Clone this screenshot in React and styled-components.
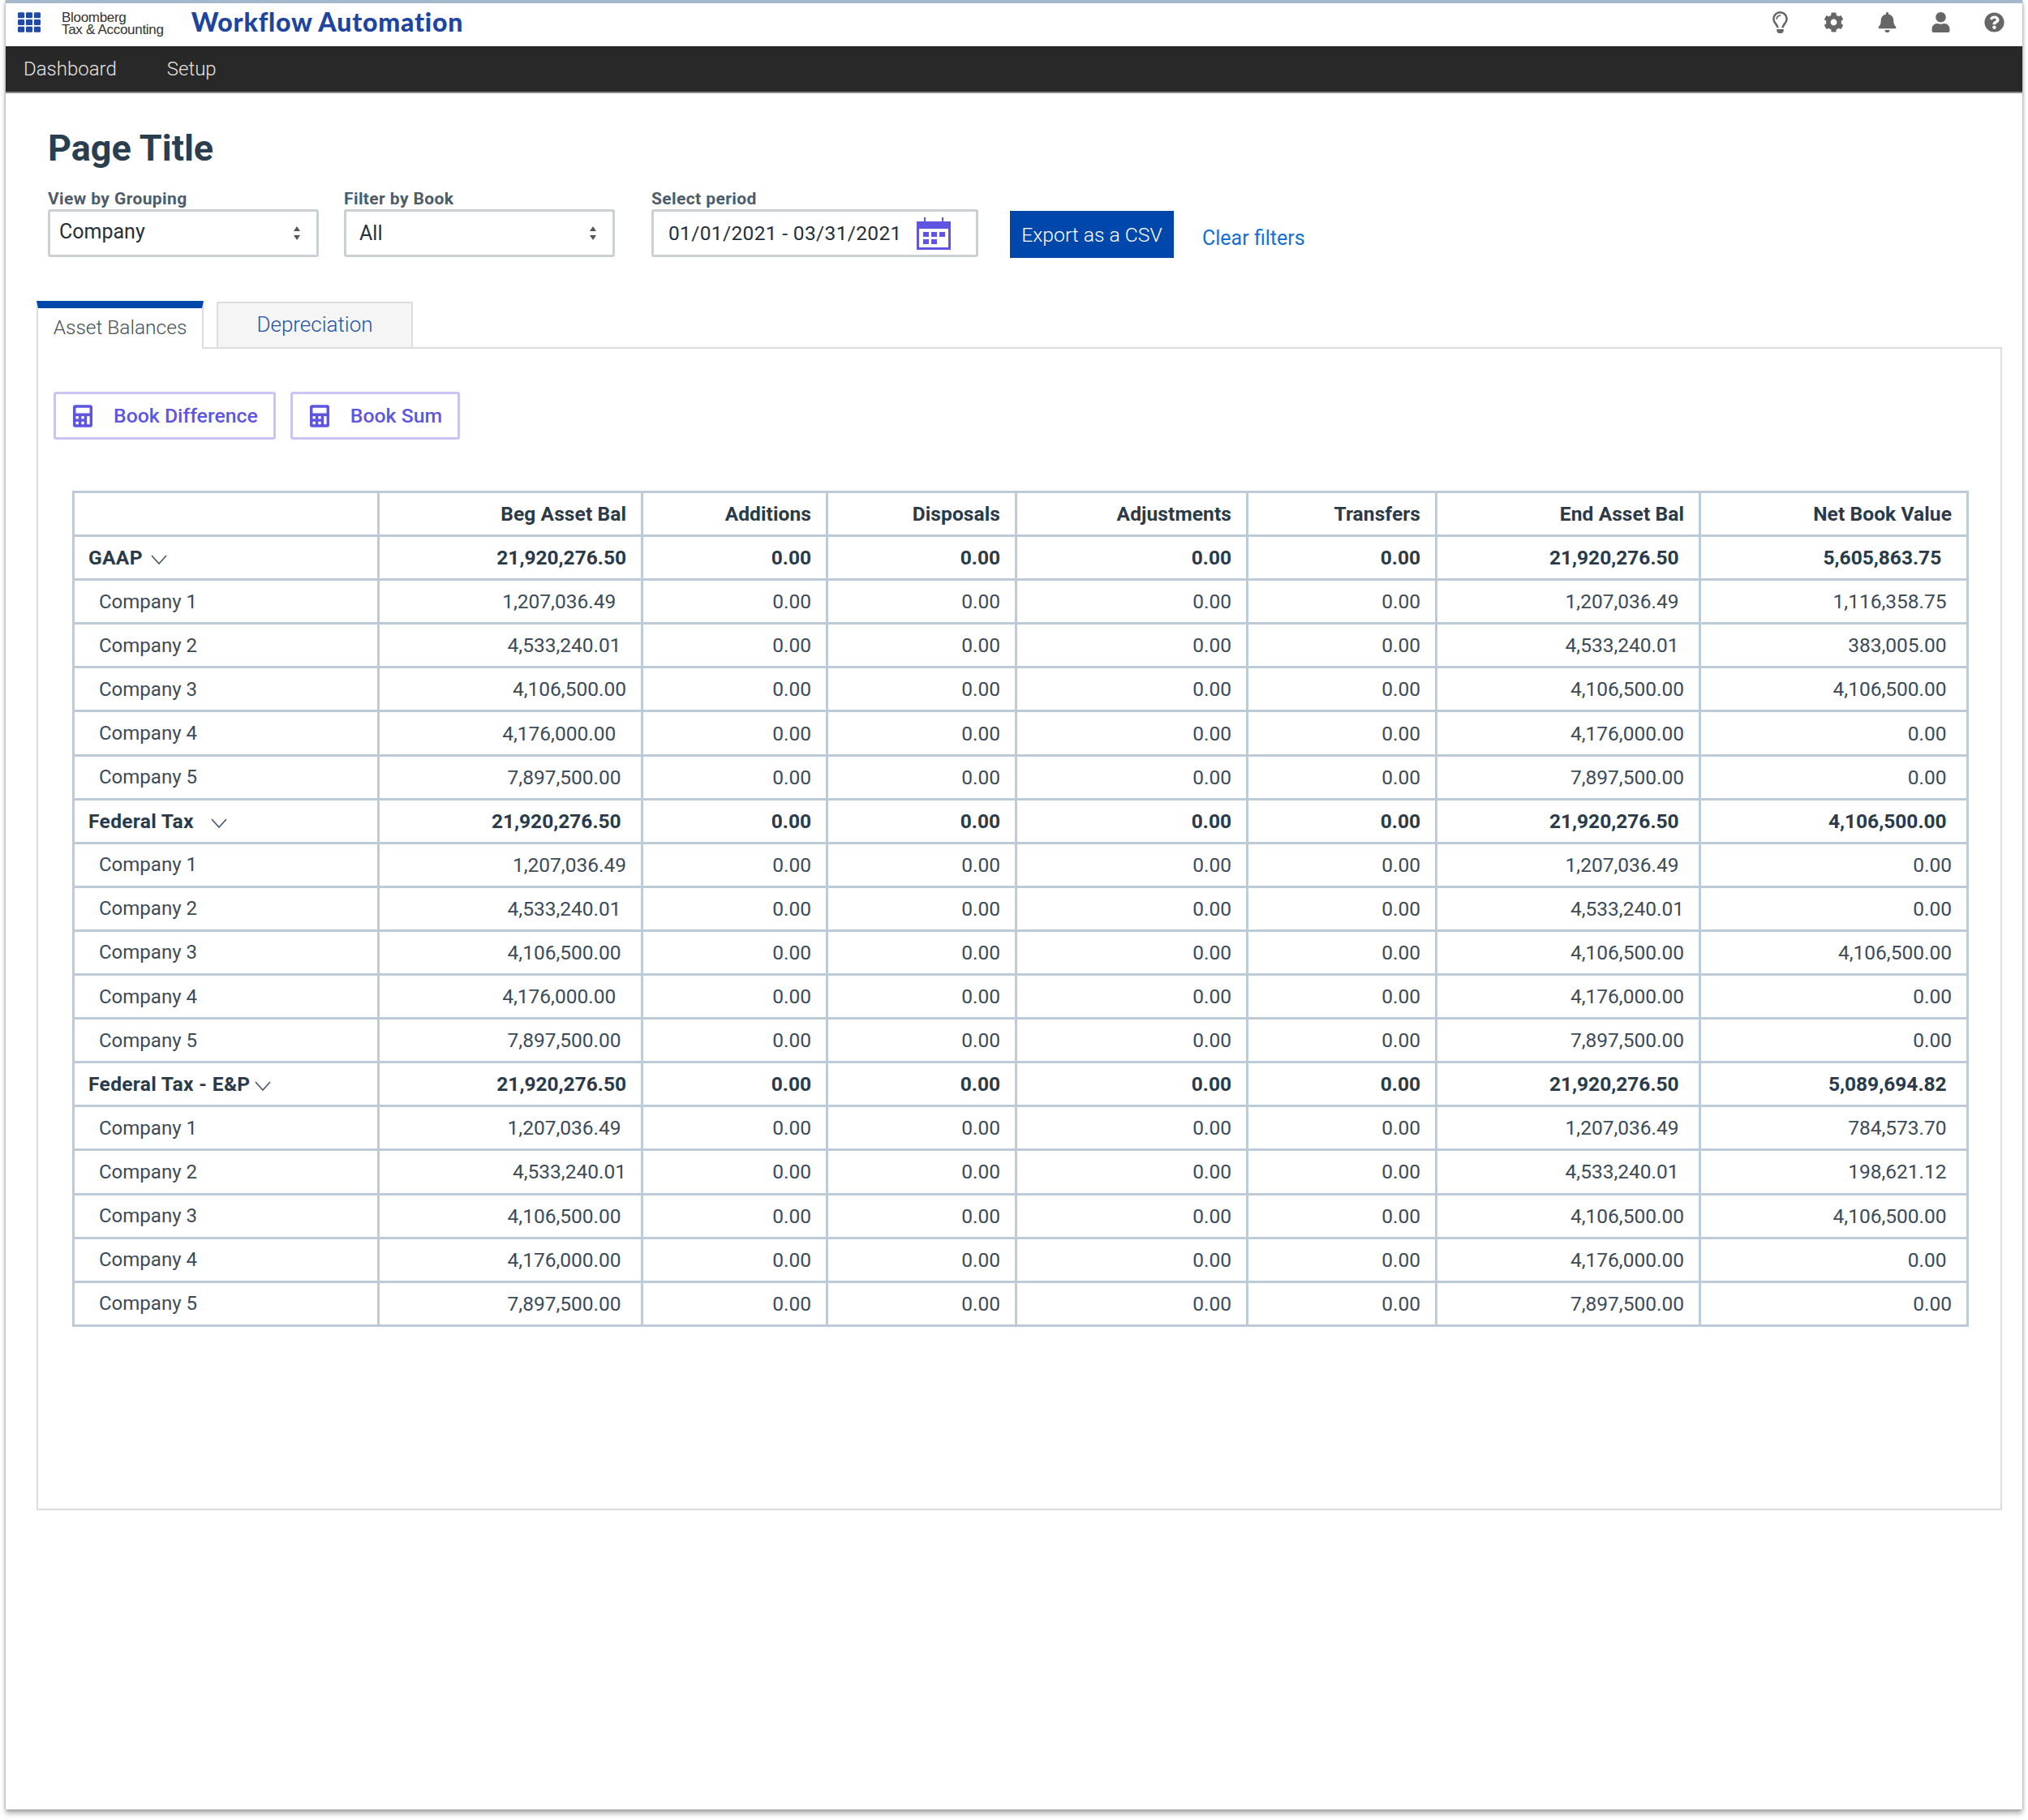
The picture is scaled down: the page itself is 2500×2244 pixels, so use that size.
import React from "react";
import styled, { createGlobalStyle } from "styled-components";
import { FaTh, FaRegLightbulb, FaCog, FaBell, FaUser, FaQuestionCircle, FaCalculator } from "react-icons/fa";

const GlobalStyle = createGlobalStyle`
  html, body { margin: 0; padding: 0; background: #fff; }
  body { font-family: Roboto, "Liberation Sans", sans-serif; }
  * { box-sizing: border-box; }
`;

const Page = styled.div`
  width: 2500px;
  height: 2244px;
  padding: 0 7px;
`;

const Frame = styled.div`
  height: 2231px;
  background: #fff;
  border-top: 4px solid #a4b8cb;
  box-shadow: 0 5px 6px rgba(0, 0, 0, 0.3), 1px 0 3px rgba(0, 0, 0, 0.15), -1px 0 3px rgba(0, 0, 0, 0.15);
`;

const TopBar = styled.div`
  display: flex;
  align-items: center;
  height: 53px;
  padding: 0 0 7px 15px;
`;

const AppGrid = styled(FaTh)`
  width: 28px;
  height: 31px;
  color: #1f4aa5;
`;

const Logo = styled.div`
  margin: 5px 0 0 26px;
  font-family: "Liberation Sans", sans-serif;
  font-size: 17px;
  line-height: 14.5px;
  letter-spacing: -0.3px;
  color: #333;
`;

const AppName = styled.div`
  margin: -1px 0 0 34px;
  font-family: Lato, sans-serif;
  font-weight: 900;
  font-size: 32px;
  letter-spacing: 0.8px;
  color: #1d45a0;
`;

const TopIcons = styled.div`
  margin-left: auto;
  display: flex;
  align-items: center;
  padding-right: 2px;
  color: #666;
`;

const IconSlot = styled.span`
  display: flex;
  justify-content: center;
  width: 66px;
  svg { height: ${(p) => p.$size || 25}px; width: auto; display: block; }
`;

const NavBar = styled.div`
  display: flex;
  align-items: center;
  gap: 62px;
  height: 58px;
  padding-left: 22px;
  background: #282828;
  border-bottom: 2px solid #8a8a8a;
`;

const NavItem = styled.span`
  font-size: 24px;
  font-weight: 300;
  color: #e4e4e4;
`;

const Header = styled.div`
  padding: 42px 0 0 52px;
`;

const Title = styled.h1`
  margin: 0;
  font-size: 45px;
  line-height: 52px;
  font-weight: 700;
  color: #2b3e50;
`;

const Filters = styled.div`
  display: flex;
  align-items: flex-end;
  margin-top: 25px;
`;

const Field = styled.div`
  width: ${(p) => p.$width}px;
  margin-right: ${(p) => p.$gap}px;
`;

const Label = styled.div`
  font-size: 21px;
  line-height: 22px;
  letter-spacing: 0.4px;
  margin-bottom: 2px;
  font-weight: 700;
  color: #4c5c6a;
`;

const Box = styled.div`
  display: flex;
  align-items: center;
  justify-content: space-between;
  height: 59px;
  padding: 0 ${(p) => p.$right || 20}px 0 ${(p) => p.$left}px;
  background: #fff;
  border: 3px solid #c9d0d6;
  border-radius: 3px;
  font-size: 25px;
  color: #26303a;
`;

const BoxText = styled.span`
  margin-top: ${(p) => p.$lift || 0}px;
`;

const DateText = styled.span`
  font-size: 24.5px;
  letter-spacing: 0.35px;
`;

const ExportButton = styled.button`
  width: 202px;
  height: 58px;
  margin-bottom: -1px;
  border: none;
  background: #0047ab;
  color: #fff;
  font-family: inherit;
  font-size: 24.7px;
  font-weight: 300;
`;

const ClearLink = styled.a`
  margin-left: 35px;
  margin-bottom: 9px;
  font-size: 25px;
  color: #1670d2;
`;

const Tabs = styled.div`
  display: flex;
  margin: 54px 0 0 38px;
`;

const ActiveTab = styled.div`
  position: relative;
  z-index: 1;
  width: 206px;
  height: 59px;
  margin-bottom: -2px;
  padding-top: 5px;
  background: #fff;
  border-top: 9px solid #0047ab;
  border-left: 2px solid #ddd;
  border-right: 2px solid #ddd;
  font-size: 24.5px;
  font-weight: 300;
  line-height: 38px;
  text-align: center;
  color: #44505a;
`;

const Tab = styled.div`
  width: 242px;
  height: 56px;
  margin: 1px 0 0 16px;
  background: #f5f5f5;
  border: 2px solid #ddd;
  border-bottom: none;
  font-size: 26px;
  font-weight: 300;
  line-height: 52px;
  text-align: center;
  color: #2452a8;
`;

const Panel = styled.div`
  width: 2423px;
  height: 1434px;
  margin-left: 38px;
  padding: 53px 0 0 19px;
  border: 2px solid #ddd;
`;

const Actions = styled.div`
  display: flex;
  gap: 18px;
`;

const ActionButton = styled.button`
  display: flex;
  align-items: center;
  gap: 26px;
  height: 59px;
  padding: 0 19px 0 21px;
  background: #fff;
  border: 3px solid #c9c4f2;
  border-radius: 3px;
  font-family: inherit;
  font-size: 24.8px;
  font-weight: 500;
  color: #5f55e0;
  svg { width: 24px; height: 28px; }
`;

const Table = styled.table`
  width: 2337px;
  margin: 63px 0 0 23px;
  table-layout: fixed;
  border-collapse: collapse;
  font-size: 24.5px;
  color: #3d4b58;
`;

const Cell = styled.td`
  height: 54.1px;
  padding: 0 ${(p) => 18 + (p.$nudge || 0) * 6.4}px 0 0;
  border: 3px solid #bccbd7;
  text-align: right;
  font-weight: ${(p) => (p.$bold ? 700 : 400)};
  color: ${(p) => (p.$bold ? "#2b3a48" : "#3d4b58")};
`;

const HeadCell = styled(Cell)`
  letter-spacing: 0.1px;
`;

const NameCell = styled(Cell)`
  padding: 0 0 0 ${(p) => (p.$bold ? 17 : 30)}px;
  text-align: left;
  font-size: ${(p) => (p.$bold ? 24.5 : 24)}px;
  letter-spacing: ${(p) => (p.$bold ? 0.35 : 0)}px;
`;

const Chevron = styled.svg`
  width: 20px;
  height: 12px;
  margin-left: ${(p) => p.$gap}px;
  fill: none;
  stroke: #44576a;
  stroke-width: 1.6;
`;

const Arrows = () => (
  <svg width="8" height="17" viewBox="0 0 8 17" fill="#555">
    <path d="M4 0l4 6H0zM4 17l-4-6h8z" />
  </svg>
);

const Calendar = () => (
  <svg width="42" height="40" viewBox="0 0 42 40" fill="#5f55e0">
    <path d="M9 0h2v6H9zM31 0h2v6h-2z" />
    <path d="M0 5h42v35H0zM3 14v23h36V14z" fillRule="evenodd" />
    <path d="M8 18h7v6H8zM18 18h7v6h-7zM28 18h7v6h-7zM8 27h7v6H8zM18 27h7v6h-7z" />
  </svg>
);

const ZERO = "0.00";

// [label, beg, nudge, end, nudge, net, nudge, chevron gap]
const rows = [
  ["GAAP", "21,920,276.50", 0, "21,920,276.50", 1, "5,605,863.75", 2, 10],
  ["Company 1", "1,207,036.49", 2, "1,207,036.49", 1, "1,116,358.75", 1],
  ["Company 2", "4,533,240.01", 1, "4,533,240.01", 1, "383,005.00", 1],
  ["Company 3", "4,106,500.00", 0, "4,106,500.00", 0, "4,106,500.00", 1],
  ["Company 4", "4,176,000.00", 2, "4,176,000.00", 0, ZERO, 1],
  ["Company 5", "7,897,500.00", 1, "7,897,500.00", 0, ZERO, 1],
  ["Federal Tax", "21,920,276.50", 1, "21,920,276.50", 1, "4,106,500.00", 1, 21],
  ["Company 1", "1,207,036.49", 0, "1,207,036.49", 1, ZERO, 0],
  ["Company 2", "4,533,240.01", 1, "4,533,240.01", 0, ZERO, 0],
  ["Company 3", "4,106,500.00", 1, "4,106,500.00", 0, "4,106,500.00", 0],
  ["Company 4", "4,176,000.00", 2, "4,176,000.00", 0, ZERO, 0],
  ["Company 5", "7,897,500.00", 1, "7,897,500.00", 0, ZERO, 0],
  ["Federal Tax - E&P", "21,920,276.50", 0, "21,920,276.50", 1, "5,089,694.82", 1, 5],
  ["Company 1", "1,207,036.49", 1, "1,207,036.49", 1, "784,573.70", 1],
  ["Company 2", "4,533,240.01", 0, "4,533,240.01", 1, "198,621.12", 1],
  ["Company 3", "4,106,500.00", 1, "4,106,500.00", 0, "4,106,500.00", 1],
  ["Company 4", "4,176,000.00", 1, "4,176,000.00", 0, ZERO, 1],
  ["Company 5", "7,897,500.00", 1, "7,897,500.00", 0, ZERO, 0],
];

const columns = [376, 325, 228, 233, 285, 233, 325, 330];
const headings = ["Beg Asset Bal", "Additions", "Disposals", "Adjustments", "Transfers", "End Asset Bal", "Net Book Value"];

export default function App() {
  return (
    <Page>
      <GlobalStyle />
      <Frame>
        <TopBar>
          <AppGrid />
          <Logo>
            Bloomberg
            <br />
            Tax &amp; Accounting
          </Logo>
          <AppName>Workflow Automation</AppName>
          <TopIcons>
            <IconSlot $size={27}>
              <FaRegLightbulb />
            </IconSlot>
            <IconSlot>
              <FaCog />
            </IconSlot>
            <IconSlot>
              <FaBell />
            </IconSlot>
            <IconSlot>
              <FaUser />
            </IconSlot>
            <IconSlot>
              <FaQuestionCircle />
            </IconSlot>
          </TopIcons>
        </TopBar>
        <NavBar>
          <NavItem>Dashboard</NavItem>
          <NavItem>Setup</NavItem>
        </NavBar>
        <Header>
          <Title>Page Title</Title>
          <Filters>
            <Field $width={334} $gap={31}>
              <Label>View by Grouping</Label>
              <Box $left={11}>
                <BoxText $lift={-4}>Company</BoxText>
                <Arrows />
              </Box>
            </Field>
            <Field $width={334} $gap={45}>
              <Label>Filter by Book</Label>
              <Box $left={16}>
                <BoxText>All</BoxText>
                <Arrows />
              </Box>
            </Field>
            <Field $width={403} $gap={39}>
              <Label>Select period</Label>
              <Box $left={18} $right={31}>
                <DateText>01/01/2021 - 03/31/2021</DateText>
                <Calendar />
              </Box>
            </Field>
            <ExportButton>Export as a CSV</ExportButton>
            <ClearLink>Clear filters</ClearLink>
          </Filters>
        </Header>
        <Tabs>
          <ActiveTab>Asset Balances</ActiveTab>
          <Tab>Depreciation</Tab>
        </Tabs>
        <Panel>
          <Actions>
            <ActionButton>
              <FaCalculator />
              Book Difference
            </ActionButton>
            <ActionButton>
              <FaCalculator />
              Book Sum
            </ActionButton>
          </Actions>
          <Table>
            <colgroup>
              {columns.map((w, i) => (
                <col key={i} width={w} />
              ))}
            </colgroup>
            <tbody>
              <tr>
                <NameCell $bold />
                {headings.map((h) => (
                  <HeadCell key={h} $bold>
                    {h}
                  </HeadCell>
                ))}
              </tr>
              {rows.map(([label, beg, begN, end, endN, net, netN, gap], i) => {
                const bold = gap !== undefined;
                return (
                  <tr key={i}>
                    <NameCell $bold={bold}>
                      {label}
                      {bold && (
                        <Chevron $gap={gap} viewBox="0 0 20 12">
                          <path d="M1 1l9 10 9-10" />
                        </Chevron>
                      )}
                    </NameCell>
                    <Cell $bold={bold} $nudge={begN}>{beg}</Cell>
                    <Cell $bold={bold}>{ZERO}</Cell>
                    <Cell $bold={bold}>{ZERO}</Cell>
                    <Cell $bold={bold}>{ZERO}</Cell>
                    <Cell $bold={bold}>{ZERO}</Cell>
                    <Cell $bold={bold} $nudge={endN}>{end}</Cell>
                    <Cell $bold={bold} $nudge={netN}>{net}</Cell>
                  </tr>
                );
              })}
            </tbody>
          </Table>
        </Panel>
      </Frame>
    </Page>
  );
}
